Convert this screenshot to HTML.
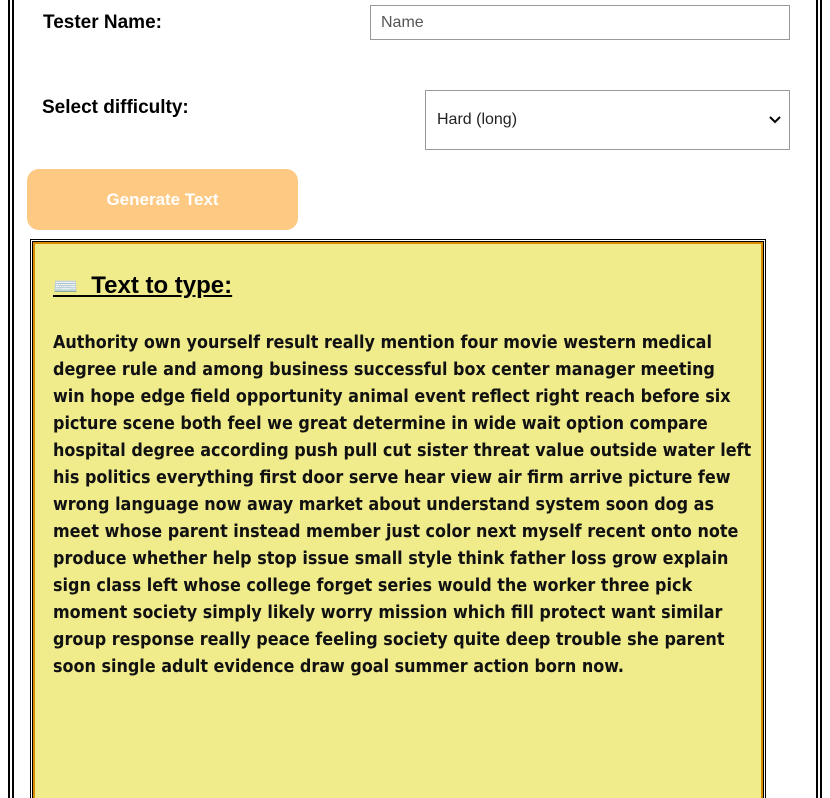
<!DOCTYPE html>
<html style="overflow:hidden;height:798px"><head><style>
body{margin:0;width:830px;height:798px;overflow:hidden;background:#fff;font-family:"Liberation Sans",Arial,sans-serif;position:relative}
.ol{position:absolute;top:0;height:798px;width:2px;background:#000}
.lbl{position:absolute;font-weight:bold;font-size:19px;color:#000}
.inp{position:absolute;border:1px solid #999;box-sizing:border-box;background:#fff;font-size:16px;color:#555}
.btn{position:absolute;left:27px;top:169px;width:271px;height:61px;background:#fec983;border-radius:12px;color:#fff;font-weight:bold;font-size:17px;text-align:center;line-height:61px}
.box1{position:absolute;left:30px;top:239px;width:736px;height:570px;border:1px solid #000;box-sizing:border-box}
.box2{position:absolute;left:32px;top:241px;width:732px;height:570px;border:1px solid #000;box-sizing:border-box}
.box3{position:absolute;left:33px;top:242px;width:730px;height:570px;border:2px solid #d98c00;box-sizing:border-box;background:#f0ec8c}
h2{position:absolute;left:53px;top:272px;margin:0;font-size:24px;font-weight:bold;text-decoration:underline;color:#000}
.txt{position:absolute;left:53px;top:329px;width:720px;font-size:17.8px;font-weight:bold;line-height:27px;color:#111;font-family:"DejaVu Sans Condensed","Liberation Sans",sans-serif;white-space:nowrap}
</style></head><body>
<div class="ol" style="left:8px"></div><div class="ol" style="left:12px;width:2px"></div>
<div class="ol" style="left:816px"></div><div class="ol" style="left:820px"></div>
<div class="lbl" style="left:43px;top:12px">Tester Name:</div>
<div class="inp" style="left:370px;top:5px;width:420px;height:35px;padding:8px 10px;">Name</div>
<div class="lbl" style="left:42px;top:97px">Select difficulty:</div>
<div class="inp" style="left:425px;top:90px;width:365px;height:60px;padding:20px 11px;color:#222">Hard (long)<svg style="position:absolute;right:8px;top:24px" width="12" height="10" viewBox="0 0 12 10"><path d="M1 2 L6 7 L11 2" stroke="#000" stroke-width="2" fill="none"/></svg></div>
<div class="btn">Generate Text</div>
<div class="box1"></div><div class="box2"></div><div class="box3"></div>
<h2><span style="font-size:20px">⌨️</span>&nbsp; Text to type:</h2>
<div class="txt">Authority own yourself result really mention four movie western medical<br>degree rule and among business successful box center manager meeting<br>win hope edge field opportunity animal event reflect right reach before six<br>picture scene both feel we great determine in wide wait option compare<br>hospital degree according push pull cut sister threat value outside water left<br>his politics everything first door serve hear view air firm arrive picture few<br>wrong language now away market about understand system soon dog as<br>meet whose parent instead member just color next myself recent onto note<br>produce whether help stop issue small style think father loss grow explain<br>sign class left whose college forget series would the worker three pick<br>moment society simply likely worry mission which fill protect want similar<br>group response really peace feeling society quite deep trouble she parent<br>soon single adult evidence draw goal summer action born now.</div>
</body></html>
